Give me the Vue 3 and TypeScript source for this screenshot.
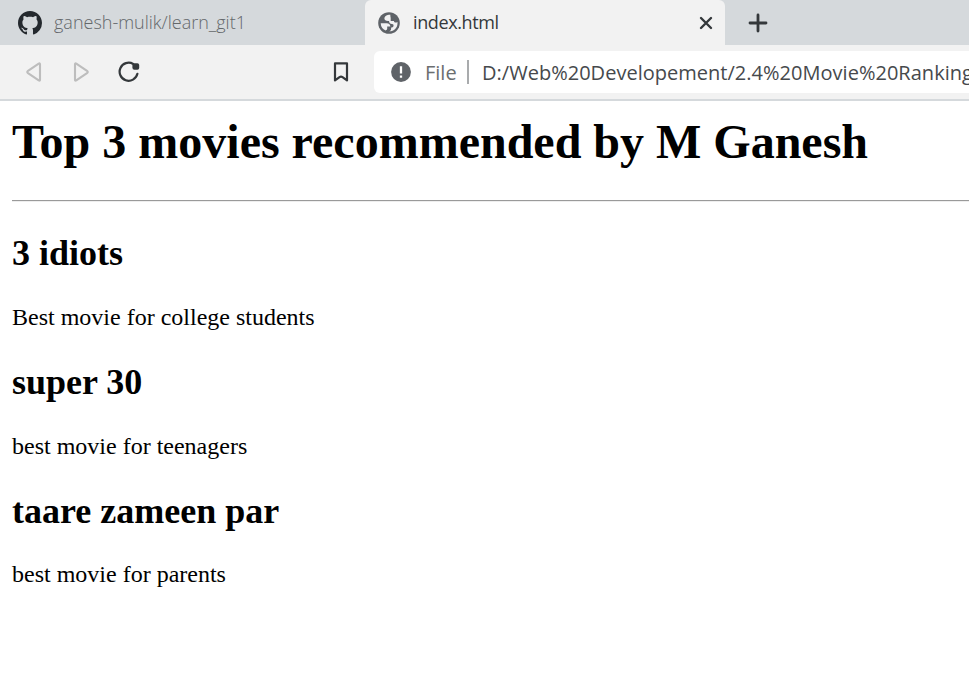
<script setup lang="ts">
interface Movie {
  title: string
  note: string
}

const movies: Movie[] = [
  { title: '3 idiots', note: 'Best movie for college students' },
  { title: 'super 30', note: 'best movie for teenagers' },
  { title: 'taare zameen par', note: 'best movie for parents' },
]
</script>

<template>
  <div class="window">
    <header class="tabs">
      <div class="tab">
        <svg class="github" viewBox="0 0 16 16"><path fill="#24292e" d="M8 0C3.58 0 0 3.58 0 8c0 3.54 2.29 6.53 5.47 7.59.4.07.55-.17.55-.38 0-.19-.01-.82-.01-1.49-2.01.37-2.53-.49-2.69-.94-.09-.23-.48-.94-.82-1.13-.28-.15-.68-.52-.01-.53.63-.01 1.08.58 1.23.82.72 1.21 1.87.87 2.33.66.07-.52.28-.87.51-1.07-1.78-.2-3.64-.89-3.64-3.95 0-.87.31-1.59.82-2.15-.08-.2-.36-1.02.08-2.12 0 0 .67-.21 2.2.82.64-.18 1.32-.27 2-.27s1.36.09 2 .27c1.53-1.04 2.2-.82 2.2-.82.44 1.1.16 1.92.08 2.12.51.56.82 1.27.82 2.15 0 3.07-1.87 3.75-3.65 3.95.29.25.54.73.54 1.48 0 1.07-.01 1.93-.01 2.2 0 .21.15.46.55.38A8.01 8.01 0 0 0 16 8c0-4.42-3.58-8-8-8z" /></svg>
        <span class="label">ganesh-mulik/learn_git1</span>
      </div>
      <div class="tab active">
        <svg class="globe" viewBox="0 0 22 22"><circle cx="11" cy="11" r="10.8" fill="#5f6368" /><path fill="#f2f2f2" d="M2.700 11.200h5.800c2.600.1 3.900 1.200 3.800 3.400H9.200v2c0 1-.6 1.500-1.600 1.900A8.500 8.500 0 0 1 2.700 11.200zM12.400 2.700C9.400 2.500 6.400 4 6.400 6.400c0 1.600 1.300 2.500 3.600 2.500h1c.2 2.100 1 3 3 3 1.400 0 1.700.8 1.500 2-.2 1.200-1.400 1.500-2.400 1.500v1.600c0 1.200-.8 2.100-2.100 2.300 4.900.2 8.500-3.500 8.500-8.100 0-.5 0-.9-.1-1.300-1.400 1-3.300.6-3.500-1h-3.200V6.300c0-1.600-.6-2-.3-3.600z" /></svg>
        <span class="label">index.html</span>
        <svg class="close" viewBox="0 0 14 14"><path d="M2 2l10 10M12 2L2 12" /></svg>
      </div>
      <svg class="plus" viewBox="0 0 20 20"><path d="M10 2v16M2 10h16" /></svg>
    </header>
    <nav class="toolbar">
      <svg class="arrow" viewBox="0 0 16 20"><path d="M14 2.2v15.6q0 1.4-1.3.6L2 11.2q-1.5-1.2 0-2.4L12.7 1.6q1.3-.8 1.3.6z" /></svg>
      <svg class="arrow forward" viewBox="0 0 16 20"><path d="M14 2.2v15.6q0 1.4-1.3.6L2 11.2q-1.5-1.2 0-2.4L12.7 1.6q1.3-.8 1.3.6z" /></svg>
      <svg class="reload" viewBox="0 0 22 22"><path class="arc" d="M15.2 3A9 9 0 1 0 19.4 12.8" /><path class="knob" d="M16.2 2.2h3.2q1.8 0 1.8 1.8v3q0 1.8-1.8 1.8h-3q-2 0-2-2V4z" /></svg>
      <svg class="bookmark" viewBox="0 0 16 20"><path d="M2 1.4h12v17l-4.5-3.3q-1.5-1-3 0L2 18.4z" /></svg>
      <div class="address">
        <svg class="info" viewBox="0 0 20 20"><circle cx="10" cy="10" r="9.9" fill="#5f6368" /><path d="M10 4.2v7.2M10 13.4v2.3" stroke="#fff" stroke-width="2.3" /></svg>
        <span class="scheme">File</span>
        <span class="divider"></span>
        <span class="url">D:/Web%20Developement/2.4%20Movie%20Ranking</span>
      </div>
    </nav>
    <main class="page">
      <h1>Top 3 movies recommended by M Ganesh</h1>
      <hr />
      <section v-for="movie in movies" :key="movie.title">
        <h2>{{ movie.title }}</h2>
        <p>{{ movie.note }}</p>
      </section>
    </main>
  </div>
</template>

<style>
body {
  margin: 0;
  background: #fff;
}
</style>

<style scoped>
.window {
  height: 699px;
  overflow: hidden;
  background: #fff;
  font-family: "Open Sans", "Noto Sans", sans-serif;
}
svg {
  display: block;
  flex: none;
  fill: none;
}
.tabs {
  display: flex;
  height: 45px;
  background: #d5d9dc;
}
.tab {
  display: flex;
  align-items: center;
  box-sizing: border-box;
  width: 365px;
  padding-left: 18px;
  font-size: 18px;
  color: #64686b;
}
.tab .label {
  padding-bottom: 1px;
  font-weight: 350;
  white-space: nowrap;
}
.github {
  width: 24px;
  height: 24px;
  margin-right: 12px;
}
.tab.active {
  width: 359.5px;
  padding: 0 11.5px 0 13px;
  border-radius: 6px 6px 0 0;
  background: #f2f2f2;
  color: #34383b;
}
.tab.active .label {
  flex: 1;
  font-weight: 500;
  letter-spacing: -0.38px;
}
.globe {
  width: 22px;
  height: 22px;
  margin-right: 13px;
}
.close {
  width: 14px;
  height: 14px;
  stroke: #34383b;
  stroke-width: 2.4;
  stroke-linecap: round;
}
.plus {
  width: 20px;
  height: 20px;
  margin: 12.5px 0 0 23px;
  stroke: #34383b;
  stroke-width: 2.8;
  stroke-linecap: round;
}
.toolbar {
  display: flex;
  align-items: center;
  box-sizing: border-box;
  height: 56px;
  padding: 0 0 0 26px;
  border-bottom: 2px solid #d5d9dc;
  background: #f2f2f2;
}
.arrow {
  width: 16px;
  height: 20px;
  stroke: #bdbdbd;
  stroke-width: 2.1;
  stroke-linejoin: round;
}
.forward {
  margin-left: 31px;
  transform: scaleX(-1);
}
.reload {
  width: 22px;
  height: 22px;
  margin-left: 29px;
}
.arc {
  stroke: #34383b;
  stroke-width: 2.2;
  stroke-linecap: round;
}
.knob {
  fill: #34383b;
}
.bookmark {
  width: 16px;
  height: 20px;
  margin-left: 192.5px;
  stroke: #34383b;
  stroke-width: 2.2;
  stroke-linejoin: round;
}
.address {
  display: flex;
  align-items: center;
  flex: 1;
  min-width: 0;
  height: 42px;
  margin-left: 25.5px;
  padding-left: 17px;
  border-radius: 6px 0 0 6px;
  background: #fff;
  font-size: 20px;
  overflow: hidden;
  white-space: nowrap;
}
.info {
  width: 20px;
  height: 20px;
}
.scheme {
  flex: none;
  width: 42px;
  margin-left: 14px;
  color: #6b6e70;
}
.divider {
  flex: none;
  width: 2px;
  height: 24px;
  background: #a9abad;
}
.url {
  flex: none;
  margin-left: 13px;
  color: #46494c;
  letter-spacing: 0.02px;
}
.page {
  padding-left: 12px;
  font-family: "Liberation Serif", serif;
  color: #000;
}
h1 {
  margin: 0;
  padding-top: 13px;
  font-size: 48px;
  line-height: 55px;
  white-space: nowrap;
}
hr {
  height: 1px;
  margin: 31px 0 0;
  border: 0;
  border-bottom: 1px solid #eee;
  background: #9a9a9a;
}
section {
  height: 128.67px;
}
section h2 {
  margin: 0;
  padding-top: 31.2px;
  font-size: 36px;
  line-height: 41px;
}
section p {
  margin: 0;
  padding-top: 29.7px;
  font-size: 24px;
  line-height: 27px;
}
</style>
